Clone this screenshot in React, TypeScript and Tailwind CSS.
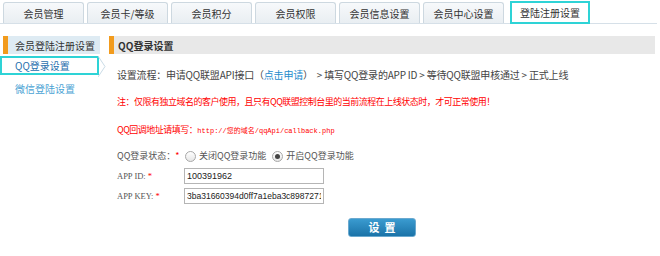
import React, { useState } from "react";

const tabs = ["会员管理", "会员卡/等级", "会员积分", "会员权限", "会员信息设置", "会员中心设置", "登陆注册设置"];

const font = "font-['SimSun','Noto_Sans_CJK_SC',sans-serif]";

const App: React.FC = () => {
  const [enabled, setEnabled] = useState(true);

  return (
    <div className={`w-[660px] h-[256px] bg-white overflow-hidden text-[#333] ${font}`}>
      {/* top tabs */}
      <div className="flex items-end h-[24px] pl-[3px] border-b border-[#d6e0e8] mr-[3px]">
        {tabs.map((t, i) =>
          i === tabs.length - 1 ? (
            <div
              key={t}
              className="ml-[3px] w-[80px] h-[23px] -mb-[1px] flex items-center justify-center bg-white border-2 border-[#2ed3d6] text-[10px] text-[#333]"
            >
              {t}
            </div>
          ) : (
            <div
              key={t}
              className="mr-[3px] w-[81px] h-[21px] flex items-center justify-center rounded-t-[3px] border border-b-0 border-[#cdd8e0] bg-gradient-to-b from-[#f7f9fb] to-[#e9eef2] text-[10px] text-[#333]"
            >
              {t}
            </div>
          )
        )}
      </div>

      <div className="flex mt-[12px]">
        {/* sidebar */}
        <div className="w-[100px] shrink-0">
          <div className="ml-[3px] h-[18px] flex items-center bg-[#deebf3] border-l-[5px] border-[#f29b1d] pl-[7px] text-[10px] text-[#333]">
            会员登陆注册设置
          </div>
          <div className="relative mt-[2px] h-[19px] w-[99px] flex items-center border-2 border-[#2ed3d6] pl-[13px] text-[10px] text-[#1f6fae]">
            QQ登录设置
            <svg className="absolute -right-[9px] top-[-3px]" width="8" height="23" viewBox="0 0 8 23">
              <path d="M0 1 L7 11.5 L0 22" fill="none" stroke="#c9dbe6" strokeWidth="1" />
            </svg>
          </div>
          <div className="h-[27px] flex items-center pl-[15px] text-[10px] text-[#4aa3d4]">微信登陆设置</div>
        </div>

        {/* main */}
        <div className="flex-1 ml-[9px] mr-[5px]">
          <div className="h-[18px] flex items-center bg-[#e8e8e8] border-l-[5px] border-[#f29b1d] pl-[4px] text-[10px] font-bold text-[#333]">
            QQ登录设置
          </div>

          <div className="pl-[8px]">
            <div className="mt-[14px] text-[10px] tracking-[-0.2px] text-[#444] leading-[14px] whitespace-nowrap">
              设置流程：申请QQ联盟API接口（<span className="text-[#1c8bcc]">点击申请</span>） &nbsp;&gt; 填写QQ登录的APP ID &gt; 等待QQ联盟申核通过 &gt; 正式上线
            </div>
            <div className="mt-[14px] text-[9px] tracking-[-0.5px] text-[#ff0000] leading-[12px] whitespace-nowrap">
              注：仅限有独立域名的客户使用，且只有QQ联盟控制台里的当前流程在上线状态时，才可正常使用！
            </div>
            <div className="mt-[16px] text-[9px] tracking-[-0.5px] text-[#ff0000] leading-[12px] whitespace-nowrap">
              QQ回调地址请填写：<span className="text-[7px] tracking-normal font-['Liberation_Mono','Noto_Sans_CJK_SC',monospace]">http://您的域名/qqApi/callback.php</span>
            </div>

            <div className="mt-[11px] flex items-center h-[16px] text-[9px] text-[#555] whitespace-nowrap">
              <span className="w-[68px]">
                QQ登录状态：<span className="text-[#ff0000]">*</span>
              </span>
              <label className="flex items-center gap-[3px] cursor-pointer" onClick={() => setEnabled(false)}>
                <span className="w-[11px] h-[11px] rounded-full border border-[#a8a8a8] bg-gradient-to-b from-white to-[#e6e6e6] flex items-center justify-center">
                  {!enabled && <span className="w-[5px] h-[5px] rounded-full bg-[#444]" />}
                </span>
                关闭QQ登录功能
              </label>
              <label className="ml-[6px] flex items-center gap-[3px] cursor-pointer" onClick={() => setEnabled(true)}>
                <span className="w-[11px] h-[11px] rounded-full border border-[#a8a8a8] bg-gradient-to-b from-white to-[#e6e6e6] flex items-center justify-center">
                  {enabled && <span className="w-[5px] h-[5px] rounded-full bg-[#444]" />}
                </span>
                开启QQ登录功能
              </label>
            </div>

            <div className="mt-[4px] flex items-center h-[16px] text-[8.5px] text-[#555] whitespace-nowrap">
              <span className="w-[67px] font-['Liberation_Serif','Noto_Sans_CJK_SC',serif]">
                APP ID: <span className="text-[#ff0000]">*</span>
              </span>
              <input
                className="w-[140px] h-[16px] border border-[#b5b5b5] px-[2px] text-[9px] text-[#222] font-['Liberation_Sans',sans-serif] outline-none"
                defaultValue="100391962"
              />
            </div>
            <div className="mt-[4px] flex items-center h-[16px] text-[8.5px] text-[#555] whitespace-nowrap">
              <span className="w-[67px] font-['Liberation_Serif','Noto_Sans_CJK_SC',serif]">
                APP KEY: <span className="text-[#ff0000]">*</span>
              </span>
              <input
                className="w-[140px] h-[16px] border border-[#b5b5b5] px-[2px] text-[8.5px] text-[#222] font-['Liberation_Sans',sans-serif] outline-none"
                defaultValue="3ba31660394d0ff7a1eba3c8987271"
              />
            </div>

            <div className="mt-[9px] ml-[231px]">
              <button className="w-[68px] h-[19px] rounded-[3px] border border-[#6aa9cf] bg-gradient-to-b from-[#3a9bd0] to-[#1a73a8] text-white text-[11px] font-bold tracking-[5px] pl-[5px] leading-none">
                设置
              </button>
            </div>
          </div>
        </div>
      </div>
    </div>
  );
};

export default App;
